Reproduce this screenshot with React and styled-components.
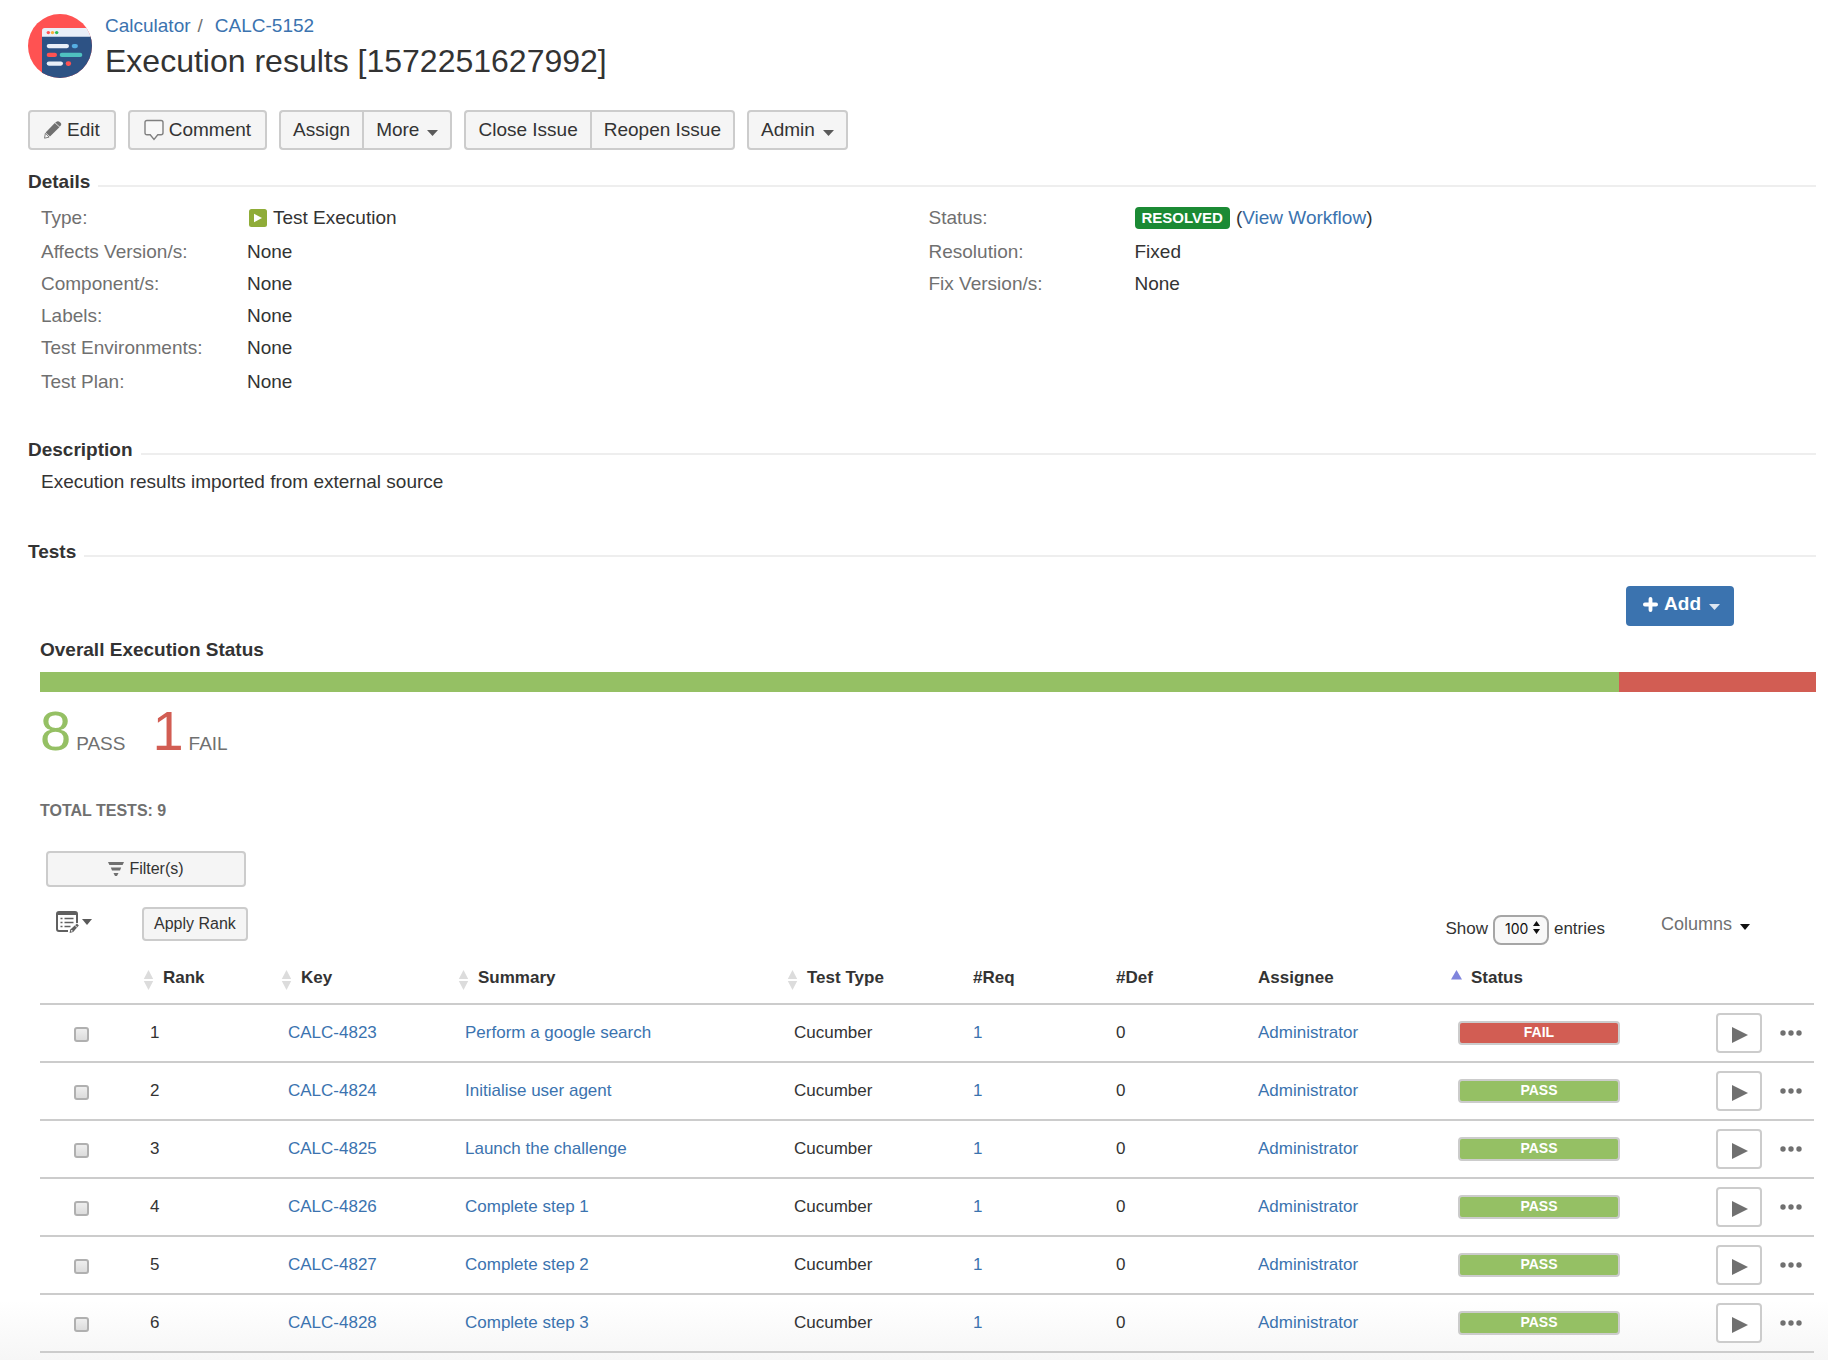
import React, { useState } from "react";
import styled, { createGlobalStyle } from "styled-components";

const ROWS = [
  { rank: 1, key: "CALC-4823", summary: "Perform a google search", status: "FAIL" },
  { rank: 2, key: "CALC-4824", summary: "Initialise user agent", status: "PASS" },
  { rank: 3, key: "CALC-4825", summary: "Launch the challenge", status: "PASS" },
  { rank: 4, key: "CALC-4826", summary: "Complete step 1", status: "PASS" },
  { rank: 5, key: "CALC-4827", summary: "Complete step 2", status: "PASS" },
  { rank: 6, key: "CALC-4828", summary: "Complete step 3", status: "PASS" },
];

const COUNTS = [
  { status: "PASS", count: 8 },
  { status: "FAIL", count: 1 },
];

const STATUS_COLORS = { PASS: "#95c064", FAIL: "#d25d53" };

const total = COUNTS.reduce((sum, item) => sum + item.count, 0);

export default function App() {
  return (
    <>
      <GlobalStyle />
      <Page>
        <IssueHeader />
        <IssueActions />
        <Details />
        <section>
          <SectionHeading $top={42}>Description</SectionHeading>
          <Description>Execution results imported from external source</Description>
        </section>
        <Tests />
      </Page>
    </>
  );
}

function IssueHeader() {
  return (
    <Header>
      <ProjectAvatar />
      <div>
        <Breadcrumbs aria-label="Breadcrumb">
          <TextLink href="#calculator">Calculator</TextLink>
          <Slash>/</Slash>
          <TextLink href="#CALC-5152">CALC-5152</TextLink>
        </Breadcrumbs>
        <Title>Execution results [1572251627992]</Title>
      </div>
    </Header>
  );
}

function IssueActions() {
  return (
    <Toolbar>
      <IconButton>
        <PencilIcon />
        Edit
      </IconButton>
      <IconButton>
        <CommentIcon />
        Comment
      </IconButton>
      <ButtonGroup>
        <Button>Assign</Button>
        <Button>
          More
          <Caret />
        </Button>
      </ButtonGroup>
      <ButtonGroup>
        <Button>Close Issue</Button>
        <Button>Reopen Issue</Button>
      </ButtonGroup>
      <Button>
        Admin
        <Caret />
      </Button>
    </Toolbar>
  );
}

function Details() {
  return (
    <section>
      <SectionHeading $top={22}>Details</SectionHeading>
      <DetailColumns>
        <DetailList>
          <DetailRow $tall>
            <dt>Type:</dt>
            <dd>
              <TestExecutionIcon />
              Test Execution
            </dd>
          </DetailRow>
          <DetailRow>
            <dt>Affects Version/s:</dt>
            <dd>None</dd>
          </DetailRow>
          <DetailRow>
            <dt>Component/s:</dt>
            <dd>None</dd>
          </DetailRow>
          <DetailRow>
            <dt>Labels:</dt>
            <dd>None</dd>
          </DetailRow>
          <DetailRow $tall>
            <dt>Test Environments:</dt>
            <dd>None</dd>
          </DetailRow>
          <DetailRow>
            <dt>Test Plan:</dt>
            <dd>None</dd>
          </DetailRow>
        </DetailList>
        <DetailList>
          <DetailRow $tall>
            <dt>Status:</dt>
            <dd>
              <Resolved>RESOLVED</Resolved>
              <span>
                (<TextLink href="#workflow">View Workflow</TextLink>)
              </span>
            </dd>
          </DetailRow>
          <DetailRow>
            <dt>Resolution:</dt>
            <dd>Fixed</dd>
          </DetailRow>
          <DetailRow>
            <dt>Fix Version/s:</dt>
            <dd>None</dd>
          </DetailRow>
        </DetailList>
      </DetailColumns>
    </section>
  );
}

function Tests() {
  return (
    <section>
      <SectionHeading $top={44}>Tests</SectionHeading>
      <TestsBody>
        <AddRow>
          <AddButton>
            <PlusIcon />
            Add
            <Caret color="#dce6f1" />
          </AddButton>
        </AddRow>
        <StatusTitle>Overall Execution Status</StatusTitle>
        <StatusBar>
          {COUNTS.map(({ status, count }) => (
            <Segment
              key={status}
              $status={status}
              style={{ width: `${(count / total) * 100}%` }}
            />
          ))}
        </StatusBar>
        <Counts>
          {COUNTS.map(({ status, count }) => (
            <Count key={status} $status={status}>
              <strong>{count}</strong>
              {status}
            </Count>
          ))}
        </Counts>
        <TotalTests>TOTAL TESTS: {total}</TotalTests>
        <FilterButton>
          <FilterIcon />
          Filter(s)
        </FilterButton>
        <TableTools />
        <TestTable />
      </TestsBody>
    </section>
  );
}

function TableTools() {
  return (
    <Tools>
      <BulkButton aria-label="Bulk actions">
        <BulkEditIcon />
        <Caret width={10} />
      </BulkButton>
      <SmallButton>Apply Rank</SmallButton>
      <Entries>
        <label htmlFor="page-size">Show</label>
        <SelectBox>
          <select id="page-size" defaultValue="100">
            <option>10</option>
            <option>50</option>
            <option>100</option>
          </select>
          <UpDownIcon />
        </SelectBox>
        <span>entries</span>
      </Entries>
      <ColumnsButton>
        Columns
        <Caret color="#111" width={10} />
      </ColumnsButton>
    </Tools>
  );
}

function TestTable() {
  const [selected, setSelected] = useState([]);

  const toggle = (rank) => {
    setSelected((current) =>
      current.includes(rank)
        ? current.filter((item) => item !== rank)
        : [...current, rank]
    );
  };

  return (
    <Table>
      <colgroup>
        <Col $w={100} />
        <Col $w={138} />
        <Col $w={177} />
        <Col />
        <Col $w={179} />
        <Col $w={143} />
        <Col $w={142} />
        <Col $w={200} />
        <Col $w={258} />
        <Col $w={64} />
        <Col $w={44} />
      </colgroup>
      <thead>
        <tr>
          <Th aria-label="Select" />
          <SortableTh label="Rank" />
          <SortableTh label="Key" />
          <SortableTh label="Summary" />
          <SortableTh label="Test Type" />
          <Th>#Req</Th>
          <Th>#Def</Th>
          <Th>Assignee</Th>
          <SortableTh label="Status" sorted />
          <Th aria-label="Run" />
          <Th aria-label="More" />
        </tr>
      </thead>
      <tbody>
        {ROWS.map((row) => (
          <tr key={row.key}>
            <Td>
              <Checkbox
                type="checkbox"
                aria-label={`Select ${row.key}`}
                checked={selected.includes(row.rank)}
                onChange={() => toggle(row.rank)}
              />
            </Td>
            <Td>{row.rank}</Td>
            <Td>
              <TextLink href={`#${row.key}`}>{row.key}</TextLink>
            </Td>
            <Td>
              <TextLink href={`#${row.key}`}>{row.summary}</TextLink>
            </Td>
            <Td>Cucumber</Td>
            <Td>
              <TextLink href="#requirements">1</TextLink>
            </Td>
            <Td>0</Td>
            <Td>
              <TextLink href="#admin">Administrator</TextLink>
            </Td>
            <Td>
              <Lozenge $status={row.status}>{row.status}</Lozenge>
            </Td>
            <Td>
              <RunButton aria-label={`Run ${row.key}`}>
                <svg width="16" height="16" viewBox="0 0 16 16">
                  <path d="M0 0 16 8 0 16z" fill="#707070" />
                </svg>
              </RunButton>
            </Td>
            <Td>
              <DotsButton aria-label={`More actions for ${row.key}`}>
                <svg width="22" height="6" viewBox="0 0 22 6" fill="#707070">
                  <circle cx="3" cy="3" r="2.7" />
                  <circle cx="11" cy="3" r="2.7" />
                  <circle cx="19" cy="3" r="2.7" />
                </svg>
              </DotsButton>
            </Td>
          </tr>
        ))}
      </tbody>
    </Table>
  );
}

function SortableTh({ label, sorted }) {
  return (
    <Th $sortable aria-sort={sorted ? "ascending" : "none"}>
      <SortButton>
        <svg width="11" height="20" viewBox="0 0 11 20">
          {sorted ? (
            <path d="M5.5 0 11 9.5H0z" fill="#8085dd" />
          ) : (
            <path d="M5.5 0 10.200 9H.8zM5.500 20 10.200 11H.8z" fill="#dcdcdc" />
          )}
        </svg>
        {label}
      </SortButton>
    </Th>
  );
}

// Icons
function Caret({ color = "#5a5a5a", width = 11 }) {
  return (
    <CaretSvg width={width} height="6" viewBox="0 0 11 6" preserveAspectRatio="none">
      <path d="M0 0h11L5.5 6z" fill={color} />
    </CaretSvg>
  );
}

function ProjectAvatar() {
  return (
    <svg width="64" height="64" viewBox="0 0 64 64" aria-hidden="true">
      <clipPath id="avatar-circle">
        <circle cx="32" cy="32" r="32" />
      </clipPath>
      <g clipPath="url(#avatar-circle)">
        <rect width="64" height="64" fill="#ff5252" />
        <path d="M14 22h50v42H14z" fill="#2d5284" />
        <path d="M14 22.7v-6a2.7 2.7 0 0 1 2.7-2.7H64v8.7z" fill="#e9eff8" />
        <circle cx="20.3" cy="18.6" r="1.7" fill="#ff5252" />
        <circle cx="24.5" cy="18.6" r="1.7" fill="#fbb03b" />
        <circle cx="28.7" cy="18.6" r="1.7" fill="#2dbd5a" />
        <rect x="18.7" y="30" width="22.3" height="4.2" rx="2.1" fill="#e9eff8" />
        <rect x="43.7" y="30" width="6.2" height="4.2" rx="2.1" fill="#56aee2" />
        <rect x="18.7" y="38.8" width="10.3" height="4.2" rx="2.1" fill="#ff5252" />
        <rect x="31.7" y="38.8" width="22.6" height="4.2" rx="2.1" fill="#4fc1c0" />
        <rect x="18.7" y="47.5" width="16.3" height="4.2" rx="2.1" fill="#e9eff8" />
        <rect x="37.7" y="47.3" width="5.4" height="4.6" rx="2.3" fill="#ff5252" />
      </g>
    </svg>
  );
}

function PencilIcon() {
  return (
    <svg width="18" height="18" viewBox="0 0 18 18">
      <path
        d="M11.2 1.6 13 .4Q14 0 15 .5l1.8 1.6q.8.9.3 1.8l-1.3 1.9-4.6-4.2zM10.800 2.100l4.600 4.200L6 15.600 1.600 11.400z"
        fill="#707070"
      />
      <path d="M1.400 12.200.5 17.200l4.600-1.100z" fill="none" stroke="#808080" strokeWidth="1" />
    </svg>
  );
}

function CommentIcon() {
  return (
    <svg width="20" height="22" viewBox="0 0 20 22">
      <path
        d="M3 1.500h14q2 0 2 2v10.300q0 2-2 2h-3.200L10 20.400l-3.800-4.600H3q-2 0-2-2V3.500q0-2 2-2z"
        fill="#f8f8f8"
        stroke="#808080"
        strokeWidth="1.4"
      />
    </svg>
  );
}

function TestExecutionIcon() {
  return (
    <TypeSvg width="18" height="18" viewBox="0 0 18 18">
      <rect width="18" height="18" rx="2.5" fill="#8fac38" />
      <path d="M5 4.800 13 9l-8 4.200z" fill="#fff" />
    </TypeSvg>
  );
}

function PlusIcon() {
  return (
    <svg width="15" height="15" viewBox="0 0 15 15">
      <path d="M7.5 1.900v11.200M1.900 7.500h11.200" stroke="#fff" strokeWidth="3.8" strokeLinecap="round" />
    </svg>
  );
}

function FilterIcon() {
  return (
    <svg width="16" height="14" viewBox="0 0 16 14" fill="#707070">
      <path d="M0 0h16l-1.400 3H1.400zM2.800 5.500h10.400l-1.200 3H4zM5.500 11h5L9 14H7z" />
    </svg>
  );
}

function BulkEditIcon() {
  return (
    <svg width="23" height="22" viewBox="0 0 23 22" fill="none" stroke="#606060">
      <path d="M21 12V3q0-2-2-2H3Q1 1 1 3v15q0 2 2 2h9" strokeWidth="2" />
      <path d="M1 2.500h20" strokeWidth="3" />
      <path d="M4.500 7.500h2M8.500 7.500h9M4.500 11.500h2M8.500 11.500h9M4.500 15.500h2M8.500 15.500h6" strokeWidth="1.6" />
      <path d="M21 12.500l1.800 2-5.600 6.600-3.600.9.700-3.400z" fill="#606060" stroke="none" />
      <path d="m18.800 14.300 2.300 2" stroke="#fff" strokeWidth=".8" />
      <circle cx="15.8" cy="19.9" r=".8" fill="#fff" stroke="none" />
    </svg>
  );
}

function UpDownIcon() {
  return (
    <svg width="7" height="13" viewBox="0 0 7 13" fill="#111" aria-hidden="true">
      <path d="M3.500 0 7 5H0zM3.500 13 7 8H0z" />
    </svg>
  );
}

// Styles
const GlobalStyle = createGlobalStyle`
  * {
    box-sizing: border-box;
  }
  body {
    margin: 0;
    background: #fff;
    color: #333;
    font-family: "Liberation Sans", Arial, sans-serif;
    font-size: 19px;
    line-height: 20px;
  }
  h1, h2, h3, p, dl, dd {
    margin: 0;
  }
  button {
    font: inherit;
    color: inherit;
    cursor: pointer;
  }
  svg {
    flex: none;
  }
`;
const Page = styled.main`
  min-height: 100vh;
  padding: 14px 12px 7px 28px;
  background: linear-gradient(to top, #f6f6f6, #fff 60px);
`;
const TextLink = styled.a`
  color: #3b73af;
  text-decoration: none;
  &:hover {
    text-decoration: underline;
  }
`;
const Header = styled.header`
  display: flex;
  align-items: flex-start;
  gap: 13px;
`;
const Breadcrumbs = styled.nav`
  display: flex;
  line-height: 24px;
`;
const Slash = styled.span`
  margin: 0 12px 0 7px;
  color: #707070;
`;
const Title = styled.h1`
  font-size: 32px;
  font-weight: normal;
  line-height: 46px;
`;
const Toolbar = styled.div`
  display: flex;
  gap: 12px;
  margin-top: 26px;
`;
const Button = styled.button`
  display: flex;
  align-items: center;
  justify-content: center;
  gap: 6px;
  height: 40px;
  padding: 0 12px;
  border: 2px solid #ccc;
  border-radius: 4px;
  background: #f5f5f5;
  white-space: nowrap;
`;
const IconButton = styled(Button)`
  gap: 5px;
  padding: 0 14px;
`;
const CaretSvg = styled.svg`
  margin: 5px 0 0 2px;
`;
const TypeSvg = styled.svg`
  margin-left: 2px;
`;
const ButtonGroup = styled.div`
  display: flex;
  & > ${Button}:first-child {
    border-right-width: 0;
    border-radius: 4px 0 0 4px;
  }
  & > ${Button}:last-child {
    border-radius: 0 4px 4px 0;
  }
`;
const SectionHeading = styled.h2`
  display: flex;
  align-items: flex-end;
  gap: 8px;
  margin-top: ${({ $top }) => $top}px;
  font-size: 19px;
  line-height: 20px;
  &::after {
    content: "";
    flex: 1;
    height: 2px;
    margin-bottom: 5px;
    background: #eee;
  }
`;
const DetailColumns = styled.div`
  display: grid;
  grid-template-columns: 1fr 1fr;
  margin-top: 10px;
  padding-left: 13px;
`;
const DetailList = styled.dl`
  line-height: 32px;
`;
const DetailRow = styled.div`
  display: grid;
  grid-template-columns: 206px 1fr;
  margin-bottom: ${({ $tall }) => ($tall ? 2 : 0)}px;
  dt {
    color: #707070;
  }
  dd {
    display: flex;
    align-items: center;
    gap: 6px;
  }
`;
const Resolved = styled.span`
  padding: 0 7px;
  border-radius: 4px;
  background: #1b8a34;
  color: #fff;
  font-size: 15px;
  font-weight: bold;
  line-height: 22px;
`;
const Description = styled.p`
  margin-top: 6px;
  padding-left: 13px;
  line-height: 32px;
`;
const TestsBody = styled.div`
  padding-left: 12px;
`;
const AddRow = styled.div`
  display: flex;
  justify-content: flex-end;
  margin-top: 24px;
  padding-right: 82px;
`;
const AddButton = styled.button`
  display: flex;
  align-items: center;
  gap: 6px;
  height: 40px;
  padding: 0 14px 4px 17px;
  border: 0;
  border-radius: 4px;
  background: #3b73af;
  color: #fff;
  font-weight: bold;
`;
const StatusTitle = styled.h3`
  margin-top: 14px;
  font-size: 19px;
`;
const StatusBar = styled.div`
  display: flex;
  height: 20px;
  margin-top: 12px;
`;
const Segment = styled.div`
  background: ${({ $status }) => STATUS_COLORS[$status]};
`;
const Counts = styled.div`
  display: flex;
  gap: 27px;
  margin-top: 11px;
`;
const Count = styled.div`
  display: flex;
  align-items: baseline;
  gap: 5px;
  color: #707070;
  strong {
    color: ${({ $status }) => STATUS_COLORS[$status]};
    font-size: 56px;
    font-weight: normal;
    line-height: 56px;
  }
`;
const TotalTests = styled.p`
  margin-top: 42px;
  color: #707070;
  font-size: 16px;
  font-weight: bold;
`;
const FilterButton = styled(Button)`
  width: 200px;
  height: 36px;
  margin: 30px 0 0 6px;
  padding: 0;
  gap: 5px;
  font-size: 16px;
`;
const Tools = styled.div`
  display: flex;
  align-items: flex-start;
  height: 38px;
  margin-top: 20px;
  padding: 0 66px 0 16px;
`;
const PlainButton = styled.button`
  display: flex;
  align-items: center;
  height: 34px;
  padding: 0;
  border: 0;
  background: none;
`;
const BulkButton = styled(PlainButton)`
  width: 86px;
  height: 30px;
  gap: 1px;
  ${CaretSvg} {
    margin-top: 0;
  }
`;
const SmallButton = styled(Button)`
  height: 34px;
  padding: 0 10px;
  font-size: 16px;
`;
const Entries = styled.div`
  display: flex;
  align-items: baseline;
  align-self: flex-end;
  gap: 5px;
  margin-left: auto;
  font-size: 17px;
`;
const SelectBox = styled.span`
  position: relative;
  select {
    appearance: none;
    width: 56px;
    height: 30px;
    padding: 0 16px 4px 10px;
    border: 2px solid #a6a6a6;
    border-radius: 8px;
    background: #f8f8f8;
    color: #111;
    font-family: Inter, sans-serif;
    font-size: 14px;
  }
  svg {
    position: absolute;
    top: 6px;
    right: 9px;
    pointer-events: none;
  }
`;
const ColumnsButton = styled(PlainButton)`
  gap: 6px;
  margin-left: 56px;
  color: #707070;
  font-size: 18px;
`;
const Table = styled.table`
  width: calc(100% - 2px);
  margin-top: 23px;
  border-spacing: 0;
  table-layout: fixed;
  font-size: 17px;
`;
const Col = styled.col`
  width: ${({ $w }) => ($w ? `${$w}px` : "auto")};
`;
const Th = styled.th`
  height: 37px;
  padding: 0 0 0 ${({ $sortable }) => ($sortable ? 3 : 10)}px;
  border-bottom: 2px solid #ccc;
  text-align: left;
  vertical-align: top;
`;
const SortButton = styled(PlainButton)`
  gap: 9px;
  height: 20px;
  font-weight: bold;
  svg {
    margin-top: 3px;
  }
`;
const Td = styled.td`
  height: 58px;
  padding: 0 0 0 10px;
  border-bottom: 2px solid #ccc;
`;
const Checkbox = styled.input`
  appearance: none;
  display: block;
  width: 15px;
  height: 15px;
  margin: 3px 0 0 24px;
  border: 2px solid #b0b0b0;
  border-radius: 3px;
  background: linear-gradient(#eee, #dcdcdc);
  &:checked {
    background: #3b73af;
  }
`;
const Lozenge = styled.span`
  display: block;
  width: 162px;
  height: 24px;
  border: 2px solid #ccc;
  border-radius: 4px;
  background: ${({ $status }) => STATUS_COLORS[$status]};
  color: #fff;
  font-size: 14px;
  font-weight: bold;
  line-height: 18px;
  text-align: center;
`;
const RunButton = styled.button`
  display: flex;
  align-items: center;
  justify-content: center;
  width: 46px;
  height: 40px;
  padding: 4px 0 0 2px;
  border: 2px solid #ccc;
  border-radius: 4px;
  background: #fff;
`;
const DotsButton = styled(PlainButton)`
  height: 24px;
`;
